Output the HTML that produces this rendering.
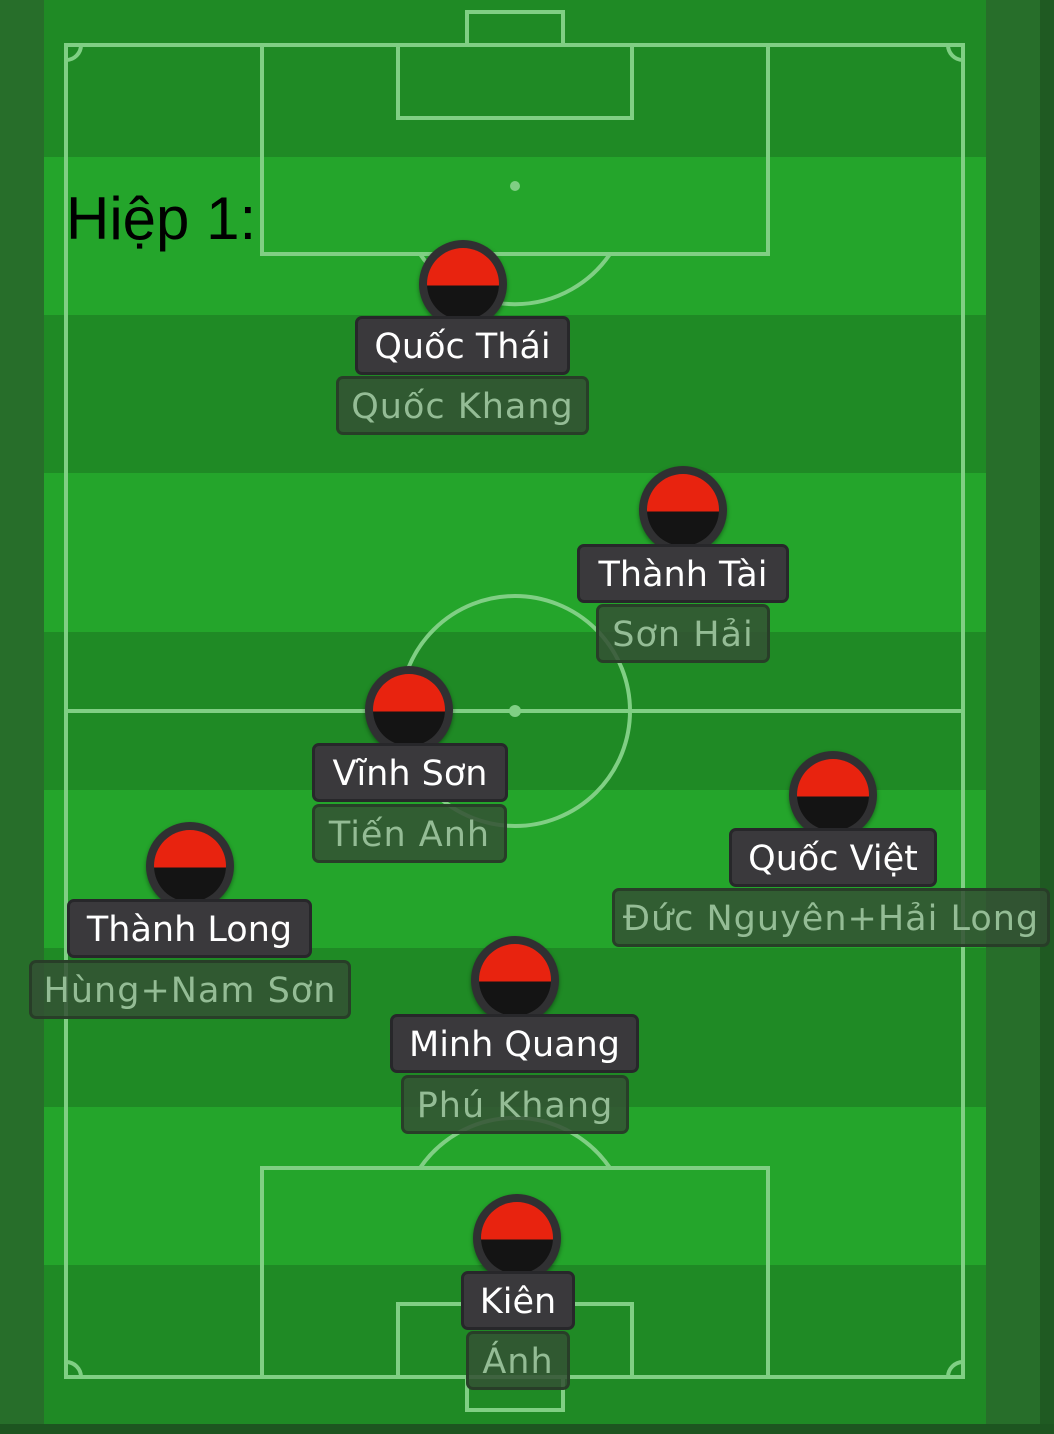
<!DOCTYPE html>
<html><head><meta charset="utf-8"><style>
html,body{margin:0;padding:0}
body{width:1054px;height:1434px;position:relative;overflow:hidden;background:#276e2a;font-family:"DejaVu Sans","Liberation Sans",sans-serif}
.pitch{position:absolute;left:44px;top:0;width:942px;height:1424px}
.s{position:absolute;left:0;width:942px}
.d{background:#1f8a25}.l{background:#24a52b}
.edge{position:absolute;left:1040px;top:0;width:14px;height:1434px;background:#1f5a22}
.bot{position:absolute;left:0;top:1424px;width:1054px;height:10px;background:#1d5520}
.c{position:absolute;width:88px;height:88px;border-radius:50%;background:#303032;box-shadow:0 2px 4px rgba(0,0,0,.4)}
.c i{position:absolute;left:8px;top:8px;width:72px;height:72px;border-radius:50%;overflow:hidden;background:linear-gradient(#e8230f 0,#e8230f 52%,#141414 52%)}
.n{position:absolute;height:59px;box-sizing:border-box;background:#3a393c;border:3px solid #27272a;border-radius:7px;color:#fff;font-size:35px;line-height:57px;text-align:center;white-space:nowrap}
.b{position:absolute;height:59px;box-sizing:border-box;background:rgba(52,80,52,.85);border:3px solid rgba(40,60,40,.9);border-radius:7px;color:#94bc95;font-size:35px;line-height:57px;text-align:center;white-space:nowrap;letter-spacing:1px}
.h{position:absolute;left:66px;top:184px;font-family:"Liberation Sans",sans-serif;font-size:60px;color:#000}
</style></head><body>
<div class="pitch">
<div class="s d" style="top:0;height:157px"></div>
<div class="s l" style="top:157px;height:158px"></div>
<div class="s d" style="top:315px;height:158px"></div>
<div class="s l" style="top:473px;height:159px"></div>
<div class="s d" style="top:632px;height:158px"></div>
<div class="s l" style="top:790px;height:158px"></div>
<div class="s d" style="top:948px;height:159px"></div>
<div class="s l" style="top:1107px;height:158px"></div>
<div class="s d" style="top:1265px;height:159px"></div>
</div>
<div class="edge"></div><div class="bot"></div>
<svg width="1054" height="1434" style="position:absolute;left:0;top:0" fill="none" stroke="#80cf84" stroke-width="4">
<rect x="66" y="45" width="897" height="1332"/>
<rect x="262" y="45" width="506" height="209"/>
<rect x="398" y="45" width="234" height="73"/>
<rect x="467" y="12" width="96" height="33"/>
<path d="M420 254 A115 115 0 0 0 610 254"/>
<line x1="66" y1="711" x2="963" y2="711"/>
<circle cx="515" cy="711" r="115"/>
<rect x="262" y="1168" width="506" height="209"/>
<rect x="398" y="1304" width="234" height="73"/>
<rect x="467" y="1377" width="96" height="33"/>
<path d="M420 1168 A115 115 0 0 1 610 1168"/>
<path d="M66 60 A15 15 0 0 0 81 45"/><path d="M948 45 A15 15 0 0 0 963 60"/>
<path d="M66 1362 A15 15 0 0 1 81 1377"/><path d="M948 1377 A15 15 0 0 1 963 1362"/>
<circle cx="515" cy="186" r="5" fill="#80cf84" stroke="none"/>
<circle cx="515" cy="711" r="6" fill="#80cf84" stroke="none"/>
</svg>
<div class="h">Hiệp 1:</div>

<div class="c" style="left:419px;top:240px"><i></i></div>
<div class="n" style="left:355px;top:316px;width:215px">Quốc Thái</div>
<div class="b" style="left:336px;top:376px;width:253px">Quốc Khang</div>

<div class="c" style="left:639px;top:466px"><i></i></div>
<div class="n" style="left:577px;top:544px;width:212px">Thành Tài</div>
<div class="b" style="left:596px;top:604px;width:174px">Sơn Hải</div>

<div class="c" style="left:365px;top:666px"><i></i></div>
<div class="n" style="left:312px;top:743px;width:196px">Vĩnh Sơn</div>
<div class="b" style="left:312px;top:804px;width:195px">Tiến Anh</div>

<div class="c" style="left:789px;top:751px"><i></i></div>
<div class="n" style="left:729px;top:828px;width:208px">Quốc Việt</div>
<div class="b" style="left:612px;top:888px;width:438px">Đức Nguyên+Hải Long</div>

<div class="c" style="left:146px;top:822px"><i></i></div>
<div class="n" style="left:67px;top:899px;width:245px">Thành Long</div>
<div class="b" style="left:29px;top:960px;width:322px">Hùng+Nam Sơn</div>

<div class="c" style="left:471px;top:936px"><i></i></div>
<div class="n" style="left:390px;top:1014px;width:249px">Minh Quang</div>
<div class="b" style="left:401px;top:1075px;width:228px">Phú Khang</div>

<div class="c" style="left:473px;top:1194px"><i></i></div>
<div class="n" style="left:461px;top:1271px;width:114px">Kiên</div>
<div class="b" style="left:466px;top:1331px;width:104px">Ánh</div>
</body></html>
